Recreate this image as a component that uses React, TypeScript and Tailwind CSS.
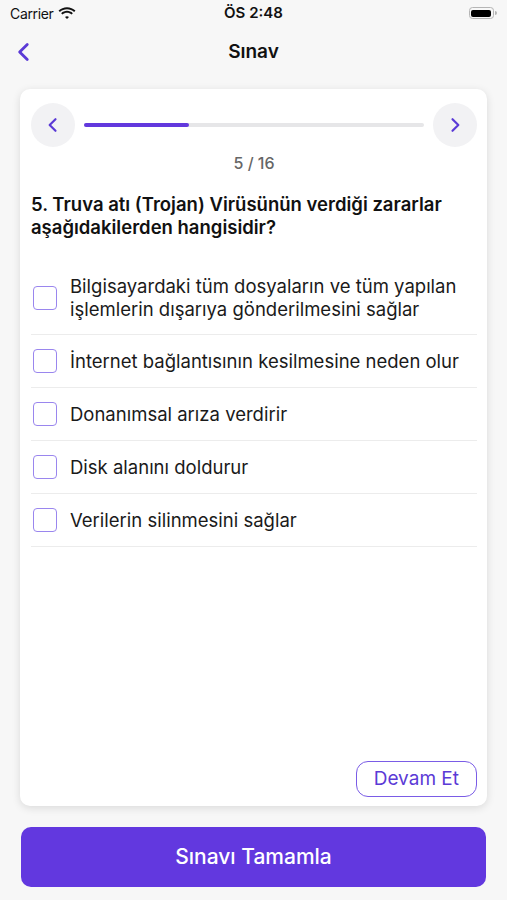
const OPTIONS = [
  "Bilgisayardaki tüm dosyaların ve tüm yapılan işlemlerin dışarıya gönderilmesini sağlar",
  "İnternet bağlantısının kesilmesine neden olur",
  "Donanımsal arıza verdirir",
  "Disk alanını doldurur",
  "Verilerin silinmesini sağlar",
];

function Chevron({ dir, className }: { dir: "left" | "right"; className?: string }) {
  return (
    <svg viewBox="0 0 24 24" className={className} fill="none" stroke="currentColor" strokeWidth={2.6} strokeLinecap="round" strokeLinejoin="round">
      {dir === "left" ? <path d="M15 5l-7 7 7 7" /> : <path d="M9 5l7 7-7 7" />}
    </svg>
  );
}

export default function App() {
  return (
    <div
      className="w-full h-[900px] bg-[#f7f7f7] flex flex-col text-[#111]"
      style={{ fontFamily: "Inter, 'Noto Sans', sans-serif" }}
    >
      {/* status bar */}
      <div className="h-[26px] flex items-center justify-between px-[10px] text-[15px]">
        <div className="flex items-center gap-[5px] w-[120px]">
          <span className="text-[14px] tracking-tight">Carrier</span>
          <svg viewBox="0 0 20 14" className="w-[18px] h-[13px]" fill="#111">
            <path d="M10 2.2c3 0 5.8 1.1 7.9 3.1l1.5-1.5C16.9 1.4 13.6 0 10 0S3.1 1.4.6 3.8l1.5 1.5C4.2 3.3 7 2.2 10 2.2z" />
            <path d="M10 6.2c1.9 0 3.6.7 5 1.9l1.5-1.5C14.7 5 12.4 4 10 4S5.3 5 3.5 6.6L5 8.1c1.4-1.2 3.1-1.9 5-1.9z" />
            <path d="M10 10c.9 0 1.6.3 2.2.8L10 13.2 7.8 10.8c.6-.5 1.3-.8 2.2-.8z" />
          </svg>
        </div>
        <span className="font-semibold text-[15px]">ÖS 2:48</span>
        <div className="w-[120px] flex justify-end">
          <div className="flex items-center">
            <div className="w-[25px] h-[12px] rounded-[3.5px] border border-[#b5b5b5] p-[1.5px]">
              <div className="w-full h-full bg-black rounded-[2px]" />
            </div>
            <div className="w-[2px] h-[4px] bg-[#b5b5b5] rounded-r-sm ml-[1px]" />
          </div>
        </div>
      </div>

      {/* nav bar */}
      <div className="h-[52px] relative flex items-center justify-center">
        <Chevron dir="left" className="absolute left-[11px] top-[13px] w-[26px] h-[26px] text-[#5b3ad6]" />
        <span className="font-semibold text-[19px]">Sınav</span>
      </div>

      {/* card */}
      <div className="mt-[11px] mx-[20px] h-[717px] bg-white rounded-[10px] shadow-[0_2px_8px_rgba(0,0,0,0.12)] flex flex-col pl-[11px] pr-[10px] pt-[14px] pb-[9px]">
        <div className="flex items-center">
          <div className="w-[44px] h-[44px] rounded-full bg-[#f2f2f4] flex items-center justify-center">
            <Chevron dir="left" className="w-[20px] h-[20px] text-[#5b3ad6]" />
          </div>
          <div className="flex-1 mx-[9px] h-[4px] rounded-full bg-[#e6e6e8]">
            <div className="h-full w-[31%] rounded-full bg-[#6238dd]" />
          </div>
          <div className="w-[44px] h-[44px] rounded-full bg-[#f2f2f4] flex items-center justify-center">
            <Chevron dir="right" className="w-[20px] h-[20px] text-[#5b3ad6]" />
          </div>
        </div>

        <div className="text-center text-[16px] text-[#666] mt-[6px] leading-[20px] font-medium">5 / 16</div>

        <div className="mt-[20px] text-[18.5px] leading-[23px] font-semibold pr-[10px]">
          5. Truva atı (Trojan) Virüsünün verdiği zararlar aşağıdakilerden hangisidir?
        </div>

        <div className="mt-[26px] flex flex-col">
          {OPTIONS.map((o, i) => (
            <div
              key={o}
              className={`flex items-center gap-[13px] border-b border-[#ececec] ${i === 0 ? "pt-[10px] pb-[13px]" : "h-[53px]"}`}
            >
              <div className="ml-[2px] w-[24px] h-[24px] shrink-0 rounded-[4px] border-[1.5px] border-[#9a86ee]" />
              <span className="text-[18.5px] leading-[23px] text-[#1a1a1a]">{o}</span>
            </div>
          ))}
        </div>

        <div className="mt-auto flex justify-end">
          <button className="h-[36px] px-[17px] rounded-[12px] border-[1.5px] border-[#7a5ce6] text-[#5b3ad6] text-[19px]">
            Devam Et
          </button>
        </div>
      </div>

      {/* bottom */}
      <div className="mt-[21px] mx-[21px]">
        <button className="w-full h-[60px] rounded-[10px] bg-[#6238df] text-white text-[21px] font-medium">
          Sınavı Tamamla
        </button>
      </div>
    </div>
  );
}
